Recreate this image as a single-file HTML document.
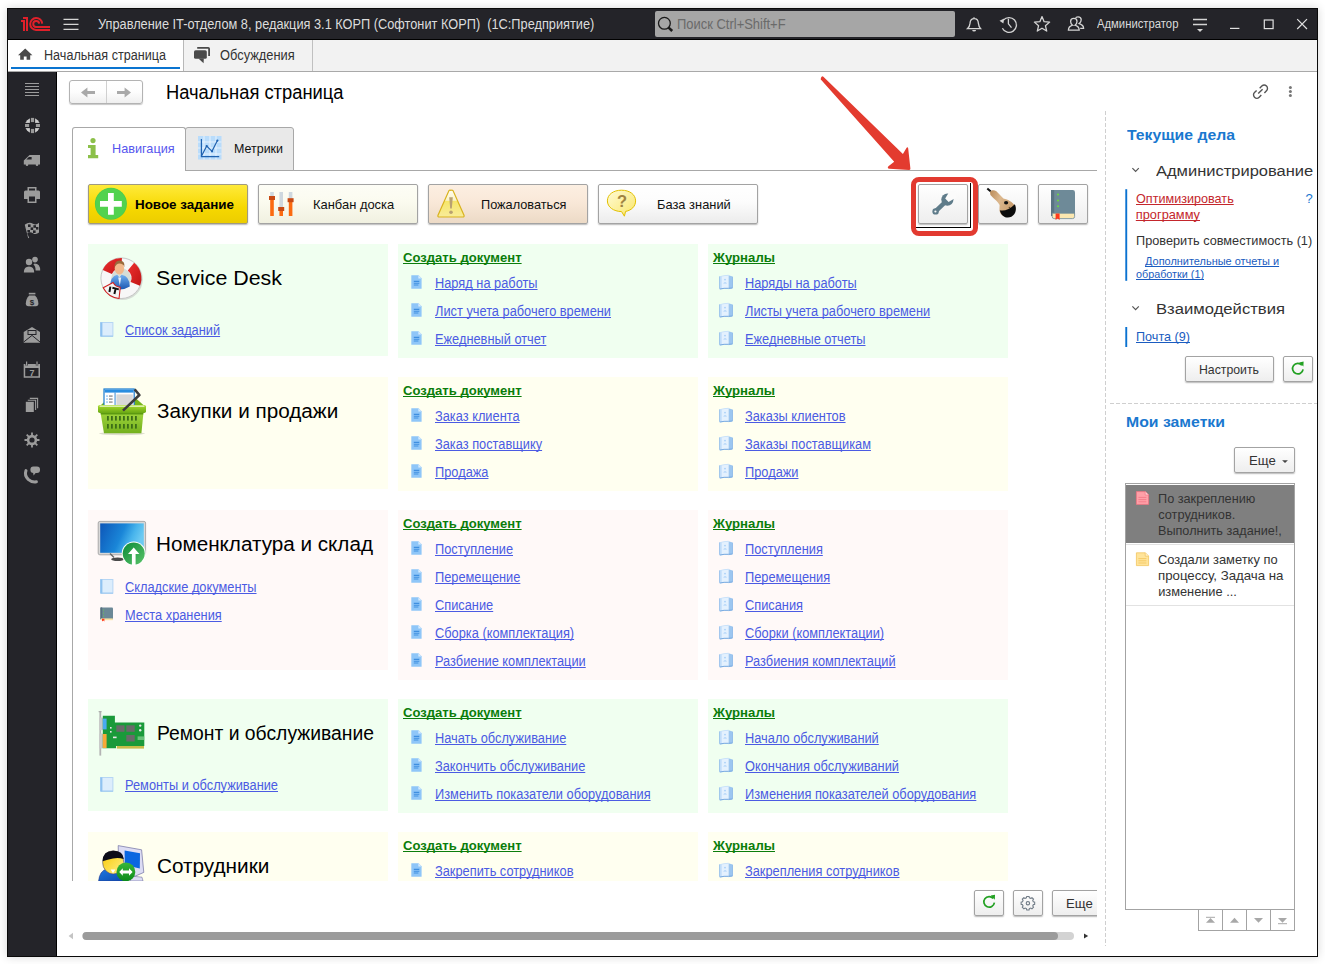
<!DOCTYPE html>
<html><head><meta charset="utf-8">
<style>
*{margin:0;padding:0;box-sizing:border-box}
html,body{width:1325px;height:964px;overflow:hidden;background:#fff;font-family:"Liberation Sans",sans-serif;position:relative}
.a{position:absolute;line-height:1;white-space:nowrap}
.sx{transform-origin:0 0}
svg{position:absolute;overflow:visible}
#frame{position:absolute;left:7px;top:8px;width:1311px;height:949px;border:1px solid #0a0a0a;box-shadow:0 0 9px rgba(0,0,0,0.16)}
#tb{position:absolute;left:8px;top:9px;width:1309px;height:31px;background:#242429;border-bottom:1px solid #000}
#tabs{position:absolute;left:8px;top:40px;width:1309px;height:32px;background:#f2f2f2;border-bottom:1px solid #a9a9a9}
#side{position:absolute;left:8px;top:72px;width:49px;height:884px;background:#242429;border-right:1px solid #000}
.lnk{color:#4a4ae8;text-decoration:underline;font-size:12.7px}
.hdr{color:#0a8a0a;font-weight:bold;text-decoration:underline;font-size:13px}
.btn{position:absolute;border:1px solid #a3a3a3;border-radius:2px;box-shadow:0 1px 1.5px rgba(0,0,0,0.28);background:linear-gradient(#ffffff,#eeeeee)}
</style></head>
<body>
<div id="frame"></div>
<div id="tb"></div>
<!-- title bar content -->
<svg style="left:0;top:0" width="60" height="40" viewBox="0 0 60 40">
  <g fill="none" stroke="#e0202a" stroke-width="2">
    <path d="M21 21H24V31"/><path d="M23 18H27V31"/>
    <path d="M42.2 23.6A6 6 0 1 0 36 30H50"/>
    <path d="M39.2 23.6A3 3 0 1 0 36 27H50"/>
  </g>
</svg>
<svg style="left:0;top:0" width="90" height="40">
  <g stroke="#d6d6d6" stroke-width="1.4"><path d="M63.5 19.4H78.5M63.5 24.4H78.5M63.5 29.4H78.5"/></g>
</svg>
<div class="a" style="left:98.4px;top:17.35px;font-size:14.0px;color:#dcdcdc;transform:scaleX(0.9121);transform-origin:0 0;">Управление IT-отделом 8, редакция 3.1 КОРП (Софтонит КОРП)&nbsp; (1С:Предприятие)</div>
<div class="a" style="left:655px;top:11px;width:300px;height:26px;background:#a6a6a6;border-radius:2px"></div>
<svg style="left:0;top:0" width="700" height="40">
  <g fill="none" stroke="#1a1a1a" stroke-width="1.3"><circle cx="664.4" cy="23.3" r="5.9"/><path d="M668.6 27.6L672.2 31" stroke-width="2.6"/></g>
</svg>
<div class="a" style="left:677.4px;top:16.68px;font-size:14.2px;color:#6a6a6a;transform:scaleX(0.9130);transform-origin:0 0;">Поиск Ctrl+Shift+F</div>
<!-- right icons -->
<svg style="left:0;top:0" width="1325" height="40">
  <g fill="none" stroke="#d4d4d4" stroke-width="1.3">
    <path d="M974 17.2V18.6M968 28.6H980.6C979 27 978.6 25.6 978.4 23.4C978.2 20.4 976.6 18.6 974.2 18.6C971.8 18.6 970.2 20.4 970 23.4C969.8 25.6 969.4 27 967.6 28.6Z"/>
    <path d="M972.5 30.6H975.8" stroke-width="1.2"/>
    <path d="M1003.4 20.2A7.4 7.4 0 1 1 1002.4 28.2"/>
    <path d="M1008.4 18.8V23.8L1011.5 27.6"/>
    <path d="M1042.00 16.60L1044.12 21.69L1049.61 22.13L1045.42 25.71L1046.70 31.07L1042.00 28.20L1037.30 31.07L1038.58 25.71L1034.39 22.13L1039.88 21.69Z" stroke-linejoin="round"/>
    <path d="M1068.4 30.2C1068.4 26.8 1070.6 25.8 1072.6 25.2C1071.2 24.2 1070.6 23 1070.6 21.4C1070.6 19.4 1072 18.4 1073.8 18.4C1075.6 18.4 1077 19.4 1077 21.4C1077 23 1076.4 24.2 1075 25.2C1077 25.8 1079.2 26.8 1079.2 30.2Z"/>
    <path d="M1075.4 18.6C1075.8 17.4 1076.8 16.8 1078 16.8C1079.8 16.8 1081.2 17.8 1081.2 19.8C1081.2 21.4 1080.6 22.6 1079.2 23.6C1081.2 24.2 1083.6 25.2 1083.6 28.4H1080.2"/>
  </g>
  <path d="M999.5 20.8L1004.2 18.6L1003.4 23.6Z" fill="#d4d4d4"/>
  <path d="M972.3 30L975.8 30L974 31.8Z" fill="#d4d4d4"/>
  <g stroke="#d4d4d4" stroke-width="1.3" fill="none"><path d="M1193 19.5H1207M1193 24.5H1207"/></g>
  <path d="M1197 29.1H1203L1200 32Z" fill="#d4d4d4"/>
  <g stroke="#e0e0e0" stroke-width="1.2" fill="none">
    <path d="M1230 28.4H1239.4"/>
    <rect x="1264.3" y="20" width="8.8" height="8.6"/>
    <path d="M1297.2 19.2L1307 29M1307 19.2L1297.2 29"/>
  </g>
</svg>
<div class="a" style="left:1097.3px;top:17.62px;font-size:12.5px;color:#dcdcdc;transform:scaleX(0.9026);transform-origin:0 0;">Администратор</div>

<!-- tabs bar -->
<div id="tabs"></div>
<div class="a" style="left:8px;top:40px;width:176px;height:31px;background:#fff;border-right:1px solid #b8b8b8"></div>
<div class="a" style="left:11px;top:67px;width:169px;height:2px;background:#0a74d0"></div>
<div class="a" style="left:312px;top:40px;width:1px;height:31px;background:#c0c0c0"></div>
<svg style="left:0;top:0" width="330" height="72">
  <path d="M25.2 48.6L18 55.2H20.2V59.8H23.8V56.4H26.6V59.8H30.2V55.2H32.4Z" fill="#4a4a4a"/>
  <path d="M197.2 47.9H208.2Q209.1 47.9 209.1 48.8V55.9" fill="none" stroke="#4a4a4a" stroke-width="1.8"/>
  <rect x="194" y="50.2" width="12.8" height="8.6" rx="1.6" fill="#4a4a4a"/>
  <path d="M198.4 58.4L203.6 63.2L203.8 58.4Z" fill="#4a4a4a"/>
</svg>
<div class="a" style="left:44.3px;top:47.95px;font-size:14.0px;color:#333;transform:scaleX(0.9006);transform-origin:0 0;">Начальная страница</div>
<div class="a" style="left:220.4px;top:47.95px;font-size:14.0px;color:#333;transform:scaleX(0.9180);transform-origin:0 0;">Обсуждения</div>

<!-- sidebar -->
<div id="side"></div>
<svg style="left:0;top:0" width="60" height="500">
  <g stroke="#9c9c9c" stroke-width="1" fill="none"><path d="M25 83.5H39M25 86.5H39M25 89.5H39M25 92.5H39M25 95.5H39"/></g>
  <g fill="#a0a0a0">
    <!-- lifebuoy -->
    <circle cx="32.5" cy="125.5" r="7.5" fill="#cdcdcd"/>
  </g>
  <g fill="#242429"><rect x="29.9" y="117" width="5.2" height="17"/><rect x="24" y="122.9" width="17" height="5.2"/></g>
  <g fill="#9a9a9a"><rect x="30.9" y="117.9" width="3.2" height="4.2"/><rect x="30.9" y="128.9" width="3.2" height="4.2"/><rect x="25" y="124" width="4.1" height="3"/><rect x="35.9" y="124" width="4.1" height="3"/></g>
  <g fill="#9c9c9c">
    <!-- truck -->
    <path d="M27 157.5L29.5 155H40V164.4H23.8V160.5Z"/><circle cx="27" cy="164.8" r="1.3"/><circle cx="37" cy="164.8" r="1.3"/>
    <!-- printer -->
    <path d="M27.5 187H36.5V190.5H38.5Q40 190.5 40 192V199H36.5V203H27.5V199H24V192Q24 190.5 25.5 190.5H27.5Z M29 188.5V190.5H35V188.5Z M29 196.5V201.5H35V196.5Z" fill-rule="evenodd"/>
    <!-- flag -->
    <path d="M25 224.6Q29 221.6 33 223.8Q36 225.6 39 222.8V232.6Q36 235.2 33 233.2Q29.5 231.4 27.2 233.4L29.2 237.8L28.2 238.2L24.8 225Z"/>
    <!-- people -->
    <circle cx="29" cy="262" r="3.2"/><path d="M23.8 272.4Q23.8 266.6 29 266.4Q34.2 266.6 34.2 272.4Z"/>
    <circle cx="35" cy="259.6" r="2.8"/><path d="M34.6 263.4Q40.2 263.6 40.2 270.4H35.6Q35.6 266 33.4 264.6Z"/>
    <!-- money bag -->
    <rect x="28.8" y="292.8" width="6.6" height="1.6"/>
    <path d="M29.2 295.4H35Q38.4 299 38.4 303.6Q38.4 306.3 35.8 306.3H28.4Q25.8 306.3 25.8 303.6Q25.8 299 29.2 295.4Z"/>
    <!-- envelope -->
    <path d="M32 327L40 332V342.8H23.7V332Z"/>
    <!-- calendar -->
    <path d="M23.7 364H40V377.8H23.7Z M25.2 368H38.5V376.3H25.2Z" fill-rule="evenodd"/>
    <!-- pages -->
    <rect x="25.8" y="401.8" width="8" height="10.2"/>
    <!-- gear -->
    <circle cx="32" cy="440" r="5.2"/>
    <!-- phone bubble -->
    <rect x="30.4" y="466.6" width="9.6" height="6.4" rx="3"/>
    <path d="M33 472.4L33.6 475.6L36 472.4Z"/>
  </g>
  <g fill="#242429">
    <text x="32.1" y="304.6" font-size="8" font-weight="bold" text-anchor="middle" font-family="Liberation Sans">$</text>
    
  </g>
  <g stroke="#242429" stroke-width="1" fill="none"><path d="M23.7 342L32 335.4L40 342"/><path d="M26.6 362V365.6M37 362V365.6" stroke="#242429" stroke-width="2.4"/></g>
  <g stroke="#9c9c9c" fill="none">
    <path d="M26.6 361.6V365.4M37 361.6V365.4" stroke-width="1.2"/>
    <path d="M32 432.5V447.5M24.5 440H39.5M26.7 434.7L37.3 445.3M37.3 434.7L26.7 445.3" stroke-width="1.8"/>
    <path d="M27.8 400.2H35.6V410M29.8 398.4H37.6V408.2" stroke-width="1.1"/>
    <path d="M26 470.6Q24.2 475.6 28.2 479.4Q31.8 482.6 36.4 481.8" stroke-width="3" stroke-linecap="round"/>
  </g>
  <text x="32" y="376" font-size="9" font-weight="bold" text-anchor="middle" font-family="Liberation Sans" fill="#9c9c9c">7</text>
  <circle cx="32" cy="440" r="2.6" fill="#242429"/>
  <path d="M26.4 159.6L28.8 157H31.6V159.6Z" fill="#242429"/>
  <g fill="#242429"><rect x="28" y="224.4" width="2.6" height="2.6"/><rect x="33.4" y="225.2" width="2.6" height="2.6"/><rect x="30.6" y="227.4" width="2.6" height="2.6"/><rect x="36" y="227" width="2.4" height="2.6"/><rect x="27.4" y="230" width="2.6" height="2.4"/><rect x="33" y="230.4" width="2.6" height="2.6"/></g><rect x="27.5" y="330" width="9" height="5" fill="#242429"/>
  <rect x="28.5" y="331" width="7" height="3" fill="#9c9c9c"/>
</svg>

<!-- ===== MAIN HEADER ===== -->
<div class="a" style="left:69px;top:80px;width:74px;height:24px;border:1px solid #b3b3b3;border-radius:3px;background:linear-gradient(#ffffff 0%,#fdfdfd 50%,#efefef 100%);box-shadow:0 1px 1px rgba(0,0,0,0.22)"></div>
<div class="a" style="left:106px;top:81px;width:1px;height:22px;background:#d0d0d0"></div>
<svg style="left:0;top:0" width="150" height="110">
  <g fill="#a9a9a9">
    <path d="M81 92.5L87.4 87.4V91H95V94H87.4V97.6Z"/>
    <path d="M131 92.5L124.6 87.4V91H117V94H124.6V97.6Z"/>
  </g>
</svg>
<div class="a" style="left:166.0px;top:82.51px;font-size:19.6px;color:#000;transform:scaleX(0.9362);transform-origin:0 0;">Начальная страница</div>
<svg style="left:0;top:0" width="1325" height="110">
  <g fill="none" stroke="#555" stroke-width="1.4" stroke-linecap="butt">
    <path d="M1256.6 90.4L1254.5 92.5A3.3 3.3 0 0 0 1259.2 97.2L1261.3 95.1"/>
    <path d="M1259.7 88.2L1261.8 86.1A3.3 3.3 0 0 1 1266.5 90.8L1264.4 92.9"/>
    <path d="M1258.2 93.6L1262.6 89.2"/>
  </g>
  <g fill="#777"><circle cx="1290.4" cy="87.4" r="1.5"/><circle cx="1290.4" cy="91.5" r="1.5"/><circle cx="1290.4" cy="95.6" r="1.5"/></g>
</svg>
<!-- splitter dashed -->
<svg style="left:0;top:0" width="1325" height="964">
  <path d="M1105.5 111V946" stroke="#cfcfcf" stroke-width="1" stroke-dasharray="4 2"/>
  <path d="M1110 403.5H1317" stroke="#cfcfcf" stroke-width="1" stroke-dasharray="4 2"/>
</svg>
<!-- ===== TABS ===== -->
<div class="a" style="left:72px;top:170px;width:1px;height:711px;background:#a8a8a8"></div>
<div class="a" style="left:185px;top:170px;width:912px;height:1px;background:#a8a8a8"></div>
<div class="a" style="left:185px;top:127px;width:109px;height:44px;background:#e9e9e9;border:1px solid #a8a8a8;border-radius:3px 3px 0 0"></div>
<div class="a" style="left:72px;top:127px;width:114px;height:44px;background:#fff;border:1px solid #a8a8a8;border-bottom:none;border-radius:3px 3px 0 0"></div>
<svg style="left:0;top:0" width="300" height="180">
  <g fill="#8cc04a">
    <circle cx="93" cy="140.6" r="2.6"/>
    <path d="M88 145H95.6V155H98.2V158.2H88V155H90.6V148H88Z"/>
  </g>
  <rect x="198" y="136" width="23.5" height="23.5" fill="#b9dcfb"/>
  <g stroke="#e6f2fe" stroke-width="1"><path d="M204 136V159.5M210 136V159.5M216 136V159.5M198 142H221.5M198 148H221.5M198 154H221.5"/></g>
  <g fill="none" stroke="#1f62b0" stroke-width="1.2"><path d="M201.4 139V156.6H219.2"/><path d="M201.8 155.6L206.7 146L212 151.3L217.4 140.6"/></g><g fill="#1f62b0"><circle cx="206.7" cy="146" r="1.1"/><circle cx="212" cy="151.3" r="1.1"/><circle cx="217.4" cy="140.6" r="1.1"/></g>
</svg>
<div class="a" style="left:111.6px;top:142.20px;font-size:13.0px;color:#5656ee;transform:scaleX(0.9746);transform-origin:0 0;">Навигация</div>
<div class="a" style="left:233.5px;top:142.20px;font-size:13.0px;color:#111;transform:scaleX(0.9576);transform-origin:0 0;">Метрики</div>
<!-- ===== TOOLBAR BUTTONS ===== -->
<div class="btn" style="left:88px;top:184px;width:160px;height:40px;background:linear-gradient(#ffea3a,#f6d800 60%,#eccd00);border-color:#a09a80"></div>
<svg style="left:0;top:0" width="260" height="230">
  <circle cx="110.9" cy="203.8" r="16" fill="#4ccc4c"/>
  <circle cx="110.9" cy="203.8" r="15.2" fill="#52d24f"/>
  <path d="M108 193H113.8V201H121.8V206.8H113.8V214.8H108V206.8H100V201H108Z" fill="#fff"/>
</svg>
<div class="a" style="left:134.5px;top:198.20px;font-size:13.0px;color:#000;font-weight:bold;transform:scaleX(1.0311);transform-origin:0 0;">Новое задание</div>
<div class="btn" style="left:258px;top:184px;width:160px;height:40px;background:linear-gradient(#fdfdf6,#fbfbef 45%,#f0f0e0)"></div>
<svg style="left:0;top:0" width="430" height="230">
  <g fill="#cfd8df"><rect x="270.2" y="192" width="3.6" height="5"/><rect x="279.4" y="192" width="3.6" height="16"/><rect x="288.8" y="192" width="3.6" height="7"/></g>
  <g fill="#fb6a10"><rect x="270.2" y="199" width="3.6" height="17"/><rect x="279.4" y="210" width="3.6" height="6"/><rect x="288.8" y="201" width="3.6" height="15"/></g>
  <g fill="#c84a14"><rect x="269" y="196" width="6" height="4"/><rect x="278.2" y="207" width="6" height="4"/><rect x="287.6" y="198.2" width="6" height="4"/></g>
</svg>
<div class="a" style="left:313.4px;top:197.90px;font-size:13.0px;color:#111;transform:scaleX(0.9942);transform-origin:0 0;">Канбан доска</div>
<div class="btn" style="left:428px;top:184px;width:160px;height:40px;background:linear-gradient(#fcefe2,#f9e8d8 45%,#ecdac6)"></div>
<svg style="left:0;top:0" width="600" height="230">
  <defs><linearGradient id="wg" x1="0" y1="0" x2="0" y2="1"><stop offset="0" stop-color="#fffdf0"/><stop offset="0.38" stop-color="#fbf3c8"/><stop offset="0.42" stop-color="#f6e66a"/><stop offset="1" stop-color="#f8ec9a"/></linearGradient></defs>
  <path d="M451 190.4Q452 189.6 453 190.6L464 215.2Q464.6 217 462.6 217H439.4Q437.4 217 438 215.2L449 190.6Q449.6 189.8 451 190.4Z" fill="url(#wg)" stroke="#d9b21e" stroke-width="1.2"/>
  <path d="M449.2 197.2H452.8L451.8 208.6H450.2Z" fill="#b8a072"/>
  <circle cx="451" cy="212.2" r="1.8" fill="#b8a072"/>
</svg>
<div class="a" style="left:480.8px;top:197.90px;font-size:13.0px;color:#111;transform:scaleX(0.9794);transform-origin:0 0;">Пожаловаться</div>
<div class="btn" style="left:598px;top:184px;width:160px;height:40px;background:linear-gradient(#ffffff,#fcfcfc 45%,#ececec)"></div>
<svg style="left:0;top:0" width="700" height="230">
  <defs><linearGradient id="qg" x1="0" y1="0" x2="1" y2="1"><stop offset="0" stop-color="#fffbd6"/><stop offset="1" stop-color="#f9e66a"/></linearGradient></defs>
  <path d="M621.5 190.2C629.8 190.2 635.6 194.6 635.6 200.9C635.6 206.4 631.3 210.4 625.6 211.4L624.4 216.2L621.6 211.6C613.4 211.4 607.4 207 607.4 200.9C607.4 194.6 613.2 190.2 621.5 190.2Z" fill="url(#qg)" stroke="#e2c000" stroke-width="1"/>
  <text x="622" y="206.8" font-family="Liberation Sans" font-weight="bold" font-size="16.5" fill="#a08442" text-anchor="middle">?</text>
</svg>
<div class="a" style="left:657.0px;top:197.90px;font-size:13.0px;color:#111;transform:scaleX(0.9906);transform-origin:0 0;">База знаний</div>
<!-- right small buttons -->
<div class="btn" style="left:918px;top:184px;width:50px;height:40px"></div>
<div class="btn" style="left:978px;top:184px;width:50px;height:40px"></div>
<div class="btn" style="left:1038px;top:184px;width:50px;height:40px"></div>
<svg style="left:0;top:0" width="1100" height="240">
  <!-- wrench -->
  <path d="M935.5 211.4L945.4 201.8" stroke="#5f7c8a" stroke-width="4.4" stroke-linecap="round"/>
  <circle cx="935.6" cy="211.4" r="3.2" fill="#5f7c8a"/>
  <circle cx="947.4" cy="199.6" r="6.1" fill="#5f7c8a"/>
  <path d="M949.6 191.2L945.2 198.6L948.6 202L956.2 197.4L955.6 190.6Z" fill="#fbfbfb"/>
  <circle cx="935.4" cy="211.5" r="1.1" fill="#fafafa"/>
  <!-- scanner -->
  <defs><linearGradient id="scg" x1="0" y1="0" x2="1" y2="0.4"><stop offset="0" stop-color="#b98a58"/><stop offset="0.45" stop-color="#dcb88e"/><stop offset="1" stop-color="#c89c6c"/></linearGradient></defs>
  <path d="M987.3 188.6L990.8 191.6" stroke="#111" stroke-width="2"/>
  <path d="M990 192C991.5 189.8 994 189.6 996.4 191.2L1003.4 198.6C1008 199.4 1013.2 202.4 1015 206.4C1016.4 210.4 1013.6 215.4 1008.4 216.6C1003 217.4 999.6 214 999.4 209.4L999.6 205C998 201.6 992 197 990.4 195Z" fill="url(#scg)"/>
  <path d="M999.8 210.2C1004 211.6 1010 209 1014.8 204.2C1016.8 208.4 1016.2 213.8 1011.4 216.8C1006.4 219 1001.4 216.4 999.8 210.2Z" fill="#0c0c0c"/>
  <ellipse cx="1006.1" cy="202.8" rx="2.1" ry="1.8" fill="#111"/>
  <circle cx="1009.4" cy="207.6" r="0.8" fill="#6a5030"/>
  <!-- book -->
  <rect x="1051" y="190" width="24" height="26" rx="2.4" fill="#6e8a98"/>
  <rect x="1051" y="190" width="3.2" height="26" fill="#5a7482"/>
  <path d="M1052.2 213.2H1074.6V216.6Q1074.6 218.6 1072.6 218.6H1054.2Q1052.2 218.6 1052.2 216.6Z" fill="#fbe7b0" stroke="#6e8a98" stroke-width="0.8"/>
  <path d="M1055.6 213.6H1059.6V220L1057.6 218.4L1055.6 220Z" fill="#ff3a1c"/>
  <g fill="#6bdc3a"><circle cx="1058" cy="194.4" r="1"/><circle cx="1058" cy="200.4" r="1"/><circle cx="1058" cy="206.2" r="1"/></g>
</svg>
<!-- focus lines & red highlight -->
<div class="a" style="left:970px;top:182.5px;width:1.2px;height:45.5px;background:#000"></div>
<div class="a" style="left:916px;top:227px;width:55.2px;height:1.2px;background:#000"></div>
<div class="a" style="left:911px;top:177px;width:66.6px;height:59px;border:5px solid #e23a30;border-radius:8px"></div>
<!-- red arrow -->
<svg style="left:0;top:0" width="1000" height="200">
  <path d="M820.6 79.2L894.2 161.7L888.4 166.2Q886.8 168.4 889.4 168.8L909.2 169.9Q910.6 169.9 910.4 168.6L908.2 148.4Q907.9 146.6 906.6 147.8L902.9 153.9L823.4 76.8Q821.4 75.2 820.6 79.2Z" fill="#e33b2f"/>
</svg>

<div class="a" style="left:73px;top:171px;width:1024px;height:710px;overflow:hidden"><div class="a" style="left:-73px;top:-171px;width:1325px;height:964px">
<div class="a" style="left:88px;top:244px;width:300px;height:112px;background:#f0fff0"></div>
<div class="a" style="left:398px;top:244px;width:300px;height:114px;background:#f0fff0"></div>
<div class="a" style="left:708px;top:244px;width:300px;height:114px;background:#f0fff0"></div>
<svg style="left:0;top:0" width="160" height="310">
<defs><linearGradient id="lbw" x1="0.2" y1="0.1" x2="0.8" y2="0.95"><stop offset="0" stop-color="#ffffff"/><stop offset="0.6" stop-color="#f6f6f6"/><stop offset="1" stop-color="#d6d6d6"/></linearGradient>
<linearGradient id="lbr" x1="0" y1="0" x2="1" y2="1"><stop offset="0" stop-color="#ee3030"/><stop offset="1" stop-color="#c01414"/></linearGradient>
<linearGradient id="shirt" x1="0" y1="0" x2="0" y2="1"><stop offset="0" stop-color="#70aef0"/><stop offset="1" stop-color="#1a56b0"/></linearGradient></defs>
<circle cx="122.0" cy="279.2" r="20.8" fill="#bcbcbc" opacity="0.5"/>
<circle cx="121.2" cy="278.2" r="15.25" fill="none" stroke="#f7f7f7" stroke-width="10.5"/>
<circle cx="121.2" cy="278.2" r="20.3" fill="none" stroke="#b0b0b0" stroke-width="0.7"/>
<path d="M102.75 269.98A20.2 20.2 0 0 1 121.90 258.01L121.56 268.01A10.2 10.2 0 0 0 111.88 274.05Z" fill="url(#lbr)"/>
<path d="M134.18 262.73A20.2 20.2 0 0 1 139.93 285.77L130.66 282.02A10.2 10.2 0 0 0 127.76 270.39Z" fill="url(#lbr)"/>
<path d="M110.2 286.6Q110.2 276.4 117.2 274.8L119.4 277.6L121.6 274.8Q129.8 276.2 129.8 286.6Q125 289.6 119.6 289.6Q114.4 289.6 110.2 286.6Z" fill="url(#shirt)"/>
<path d="M118.2 277.6L119.8 285.4L121.2 277.4Z" fill="#e8eef6"/>
<ellipse cx="119.4" cy="268.4" rx="4.7" ry="6.2" fill="#f2b88c"/>
<path d="M114.6 267.8Q114 260.8 119.6 260.6Q125.2 260.8 124.4 267.2Q123.4 263.6 119.6 263.6Q115.8 263.8 114.6 267.8Z" fill="#9a6a3c"/>
<path d="M119.07 298.49A20.4 20.4 0 0 1 103.19 287.78L113.08 282.52A9.2 9.2 0 0 0 120.24 287.35Z" fill="#f4f4f4" stroke="#d02020" stroke-width="1.1"/>
<g stroke="#111" stroke-width="2" fill="none"><path d="M110.4 286.6L109.4 292"/><path d="M112.4 287.8L118.8 289.4M115.6 288.6L114.4 294"/></g>
</svg>
<div class="a" style="left:156.0px;top:269.09px;font-size:19.5px;color:#000;transform:scaleX(1.0968);transform-origin:0 0;">Service Desk</div>
<svg style="left:99.5px;top:321.5px" width="14" height="15" viewBox="0 0 14 15"><rect x="0.5" y="0.5" width="12.4" height="13.6" fill="#dcedfc" stroke="#b6d6f4" stroke-width="1"/><rect x="0.4" y="0.4" width="2" height="14" fill="#8fc2f0"/><path d="M1 14.2H13" stroke="#9cc8f0" stroke-width="1"/></svg>
<div class="a" style="left:125.2px;top:324.00px;font-size:13.8px;color:#4b5be3;text-decoration:underline;text-decoration-skip-ink:none;transform:scaleX(0.9280);transform-origin:0 0;">Список заданий</div>
<div class="a" style="left:403.0px;top:251.20px;font-size:13.7px;color:#0b7d0b;font-weight:bold;text-decoration:underline;text-decoration-skip-ink:none;transform:scaleX(0.9554);transform-origin:0 0;">Создать документ</div>
<div class="a" style="left:713.0px;top:251.20px;font-size:13.7px;color:#0b7d0b;font-weight:bold;text-decoration:underline;text-decoration-skip-ink:none;transform:scaleX(0.9622);transform-origin:0 0;">Журналы</div>
<svg style="left:410.5px;top:275px" width="12" height="14" viewBox="0 0 12 14"><path d="M0.3 0.3H7.6L10.6 3.3V13.7H0.3Z" fill="#8fc6f8"/><path d="M7.4 0.3L10.6 3.5H7.4Z" fill="#d8ecfe"/><path d="M2.8 6.4H8.3M2.8 8.2H8.3M2.8 10H7.4" stroke="#3f8fe0" stroke-width="1.1"/></svg>
<div class="a" style="left:435.2px;top:277.00px;font-size:13.8px;color:#4b5be3;text-decoration:underline;text-decoration-skip-ink:none;transform:scaleX(0.9280);transform-origin:0 0;">Наряд на работы</div>
<svg style="left:410.5px;top:303px" width="12" height="14" viewBox="0 0 12 14"><path d="M0.3 0.3H7.6L10.6 3.3V13.7H0.3Z" fill="#8fc6f8"/><path d="M7.4 0.3L10.6 3.5H7.4Z" fill="#d8ecfe"/><path d="M2.8 6.4H8.3M2.8 8.2H8.3M2.8 10H7.4" stroke="#3f8fe0" stroke-width="1.1"/></svg>
<div class="a" style="left:435.2px;top:305.00px;font-size:13.8px;color:#4b5be3;text-decoration:underline;text-decoration-skip-ink:none;transform:scaleX(0.9280);transform-origin:0 0;">Лист учета рабочего времени</div>
<svg style="left:410.5px;top:331px" width="12" height="14" viewBox="0 0 12 14"><path d="M0.3 0.3H7.6L10.6 3.3V13.7H0.3Z" fill="#8fc6f8"/><path d="M7.4 0.3L10.6 3.5H7.4Z" fill="#d8ecfe"/><path d="M2.8 6.4H8.3M2.8 8.2H8.3M2.8 10H7.4" stroke="#3f8fe0" stroke-width="1.1"/></svg>
<div class="a" style="left:435.2px;top:333.00px;font-size:13.8px;color:#4b5be3;text-decoration:underline;text-decoration-skip-ink:none;transform:scaleX(0.9280);transform-origin:0 0;">Ежедневный отчет</div>
<svg style="left:718.6px;top:274px" width="15" height="16" viewBox="0 0 15 16"><path d="M9.5 1.2L13.6 2.6V14.2L9.5 15.2Z" fill="#9cc6f0"/><path d="M0.5 2.2Q5 1 9.6 0.8V14.6Q5 14.6 1.6 15.6Q0.5 15.6 0.5 14.6Z" fill="#c6e0fa"/><path d="M2.8 2.6Q6 1.9 9.2 1.7V13.9Q6 14 2.8 14.8Z" fill="#e4f1fe"/><circle cx="6" cy="5.6" r="0.9" fill="#a8d0f8"/><path d="M4.2 9.4Q6 7 8 9.4Z" fill="#a8d0f8"/><path d="M0.8 15Q5 14 9.6 14.3L13.4 14" stroke="#78aae0" stroke-width="1" fill="none"/><path d="M0.6 2.4V14.8M13.5 2.8V14" stroke="#8ab8e8" stroke-width="0.8"/></svg>
<div class="a" style="left:745.2px;top:277.00px;font-size:13.8px;color:#4b5be3;text-decoration:underline;text-decoration-skip-ink:none;transform:scaleX(0.9280);transform-origin:0 0;">Наряды на работы</div>
<svg style="left:718.6px;top:302px" width="15" height="16" viewBox="0 0 15 16"><path d="M9.5 1.2L13.6 2.6V14.2L9.5 15.2Z" fill="#9cc6f0"/><path d="M0.5 2.2Q5 1 9.6 0.8V14.6Q5 14.6 1.6 15.6Q0.5 15.6 0.5 14.6Z" fill="#c6e0fa"/><path d="M2.8 2.6Q6 1.9 9.2 1.7V13.9Q6 14 2.8 14.8Z" fill="#e4f1fe"/><circle cx="6" cy="5.6" r="0.9" fill="#a8d0f8"/><path d="M4.2 9.4Q6 7 8 9.4Z" fill="#a8d0f8"/><path d="M0.8 15Q5 14 9.6 14.3L13.4 14" stroke="#78aae0" stroke-width="1" fill="none"/><path d="M0.6 2.4V14.8M13.5 2.8V14" stroke="#8ab8e8" stroke-width="0.8"/></svg>
<div class="a" style="left:745.2px;top:305.00px;font-size:13.8px;color:#4b5be3;text-decoration:underline;text-decoration-skip-ink:none;transform:scaleX(0.9280);transform-origin:0 0;">Листы учета рабочего времени</div>
<svg style="left:718.6px;top:330px" width="15" height="16" viewBox="0 0 15 16"><path d="M9.5 1.2L13.6 2.6V14.2L9.5 15.2Z" fill="#9cc6f0"/><path d="M0.5 2.2Q5 1 9.6 0.8V14.6Q5 14.6 1.6 15.6Q0.5 15.6 0.5 14.6Z" fill="#c6e0fa"/><path d="M2.8 2.6Q6 1.9 9.2 1.7V13.9Q6 14 2.8 14.8Z" fill="#e4f1fe"/><circle cx="6" cy="5.6" r="0.9" fill="#a8d0f8"/><path d="M4.2 9.4Q6 7 8 9.4Z" fill="#a8d0f8"/><path d="M0.8 15Q5 14 9.6 14.3L13.4 14" stroke="#78aae0" stroke-width="1" fill="none"/><path d="M0.6 2.4V14.8M13.5 2.8V14" stroke="#8ab8e8" stroke-width="0.8"/></svg>
<div class="a" style="left:745.2px;top:333.00px;font-size:13.8px;color:#4b5be3;text-decoration:underline;text-decoration-skip-ink:none;transform:scaleX(0.9280);transform-origin:0 0;">Ежедневные отчеты</div>
<div class="a" style="left:88px;top:377px;width:300px;height:112px;background:#fffff0"></div>
<div class="a" style="left:398px;top:377px;width:300px;height:114px;background:#fffff0"></div>
<div class="a" style="left:708px;top:377px;width:300px;height:114px;background:#fffff0"></div>
<svg style="left:0;top:0" width="160" height="450">
<defs><linearGradient id="bkg" x1="0" y1="0" x2="0" y2="1"><stop offset="0" stop-color="#9ed43c"/><stop offset="1" stop-color="#74b01e"/></linearGradient>
<linearGradient id="rim" x1="0" y1="0" x2="0" y2="1"><stop offset="0" stop-color="#a8dc2c"/><stop offset="1" stop-color="#6aa814"/></linearGradient></defs>
<ellipse cx="122" cy="433.6" rx="23" ry="1.6" fill="#c8c8b8" opacity="0.6"/>
<path d="M101 405L107.6 399H136.6L143.4 405Z" fill="#76b41a"/>
<rect x="104" y="389" width="30.2" height="17" fill="#fff" stroke="#1c7cd0" stroke-width="1.2"/>
<rect x="104.6" y="389.6" width="29" height="3" fill="#2a8ee0"/>
<rect x="114.6" y="392.6" width="0.9" height="13" fill="#1c7cd0"/>
<rect x="116.4" y="394.4" width="16.4" height="11" fill="#d8d8d8"/>
<g fill="#3a9ae8"><rect x="106.2" y="395.6" width="1.6" height="0.9"/><rect x="106.2" y="398.6" width="1.6" height="0.9"/><rect x="106.2" y="401.6" width="1.6" height="0.9"/></g>
<g fill="#555"><rect x="109" y="395.6" width="3.6" height="0.9"/><rect x="109" y="398.6" width="3.6" height="0.9"/><rect x="109" y="401.6" width="3.6" height="0.9"/></g>
<path d="M98 406.6Q98 405 99.8 405H144.2Q146 405 146 406.6V411.2Q146 413 144.2 413H99.8Q98 413 98 411.2Z" fill="url(#rim)"/>
<rect x="99.6" y="405.6" width="44.8" height="1.1" fill="#f4fbe0"/>
<path d="M123 410.6L139.4 395L134.6 389.4" fill="none" stroke="#3c3c3c" stroke-width="2.6" stroke-linejoin="round"/>
<path d="M100.6 413H143.4L141.4 433.2H104Z" fill="url(#bkg)"/>
<path d="M100.6 413H143.4L143.2 414.4H100.8Z" fill="#5c9a10"/>
<g fill="#3c6e18">
<rect x="107" y="416" width="1.8" height="4.6"/><rect x="111" y="416" width="1.8" height="4.6"/><rect x="115" y="416" width="1.8" height="4.6"/><rect x="119" y="416" width="1.8" height="4.6"/><rect x="123" y="416" width="1.8" height="4.6"/><rect x="127" y="416" width="1.8" height="4.6"/><rect x="131" y="416" width="1.8" height="4.6"/><rect x="135" y="416" width="1.8" height="4.6"/>
<rect x="107" y="424" width="1.8" height="4.6"/><rect x="111" y="424" width="1.8" height="4.6"/><rect x="115" y="424" width="1.8" height="4.6"/><rect x="119" y="424" width="1.8" height="4.6"/><rect x="123" y="424" width="1.8" height="4.6"/><rect x="127" y="424" width="1.8" height="4.6"/><rect x="131" y="424" width="1.8" height="4.6"/><rect x="135" y="424" width="1.8" height="4.6"/>
</g>
</svg>
<div class="a" style="left:157.0px;top:402.09px;font-size:19.5px;color:#000;transform:scaleX(1.0607);transform-origin:0 0;">Закупки и продажи</div>
<div class="a" style="left:403.0px;top:384.20px;font-size:13.7px;color:#0b7d0b;font-weight:bold;text-decoration:underline;text-decoration-skip-ink:none;transform:scaleX(0.9554);transform-origin:0 0;">Создать документ</div>
<div class="a" style="left:713.0px;top:384.20px;font-size:13.7px;color:#0b7d0b;font-weight:bold;text-decoration:underline;text-decoration-skip-ink:none;transform:scaleX(0.9622);transform-origin:0 0;">Журналы</div>
<svg style="left:410.5px;top:408px" width="12" height="14" viewBox="0 0 12 14"><path d="M0.3 0.3H7.6L10.6 3.3V13.7H0.3Z" fill="#8fc6f8"/><path d="M7.4 0.3L10.6 3.5H7.4Z" fill="#d8ecfe"/><path d="M2.8 6.4H8.3M2.8 8.2H8.3M2.8 10H7.4" stroke="#3f8fe0" stroke-width="1.1"/></svg>
<div class="a" style="left:435.2px;top:410.00px;font-size:13.8px;color:#4b5be3;text-decoration:underline;text-decoration-skip-ink:none;transform:scaleX(0.9280);transform-origin:0 0;">Заказ клиента</div>
<svg style="left:410.5px;top:436px" width="12" height="14" viewBox="0 0 12 14"><path d="M0.3 0.3H7.6L10.6 3.3V13.7H0.3Z" fill="#8fc6f8"/><path d="M7.4 0.3L10.6 3.5H7.4Z" fill="#d8ecfe"/><path d="M2.8 6.4H8.3M2.8 8.2H8.3M2.8 10H7.4" stroke="#3f8fe0" stroke-width="1.1"/></svg>
<div class="a" style="left:435.2px;top:438.00px;font-size:13.8px;color:#4b5be3;text-decoration:underline;text-decoration-skip-ink:none;transform:scaleX(0.9280);transform-origin:0 0;">Заказ поставщику</div>
<svg style="left:410.5px;top:464px" width="12" height="14" viewBox="0 0 12 14"><path d="M0.3 0.3H7.6L10.6 3.3V13.7H0.3Z" fill="#8fc6f8"/><path d="M7.4 0.3L10.6 3.5H7.4Z" fill="#d8ecfe"/><path d="M2.8 6.4H8.3M2.8 8.2H8.3M2.8 10H7.4" stroke="#3f8fe0" stroke-width="1.1"/></svg>
<div class="a" style="left:435.2px;top:466.00px;font-size:13.8px;color:#4b5be3;text-decoration:underline;text-decoration-skip-ink:none;transform:scaleX(0.9280);transform-origin:0 0;">Продажа</div>
<svg style="left:718.6px;top:407px" width="15" height="16" viewBox="0 0 15 16"><path d="M9.5 1.2L13.6 2.6V14.2L9.5 15.2Z" fill="#9cc6f0"/><path d="M0.5 2.2Q5 1 9.6 0.8V14.6Q5 14.6 1.6 15.6Q0.5 15.6 0.5 14.6Z" fill="#c6e0fa"/><path d="M2.8 2.6Q6 1.9 9.2 1.7V13.9Q6 14 2.8 14.8Z" fill="#e4f1fe"/><circle cx="6" cy="5.6" r="0.9" fill="#a8d0f8"/><path d="M4.2 9.4Q6 7 8 9.4Z" fill="#a8d0f8"/><path d="M0.8 15Q5 14 9.6 14.3L13.4 14" stroke="#78aae0" stroke-width="1" fill="none"/><path d="M0.6 2.4V14.8M13.5 2.8V14" stroke="#8ab8e8" stroke-width="0.8"/></svg>
<div class="a" style="left:745.2px;top:410.00px;font-size:13.8px;color:#4b5be3;text-decoration:underline;text-decoration-skip-ink:none;transform:scaleX(0.9280);transform-origin:0 0;">Заказы клиентов</div>
<svg style="left:718.6px;top:435px" width="15" height="16" viewBox="0 0 15 16"><path d="M9.5 1.2L13.6 2.6V14.2L9.5 15.2Z" fill="#9cc6f0"/><path d="M0.5 2.2Q5 1 9.6 0.8V14.6Q5 14.6 1.6 15.6Q0.5 15.6 0.5 14.6Z" fill="#c6e0fa"/><path d="M2.8 2.6Q6 1.9 9.2 1.7V13.9Q6 14 2.8 14.8Z" fill="#e4f1fe"/><circle cx="6" cy="5.6" r="0.9" fill="#a8d0f8"/><path d="M4.2 9.4Q6 7 8 9.4Z" fill="#a8d0f8"/><path d="M0.8 15Q5 14 9.6 14.3L13.4 14" stroke="#78aae0" stroke-width="1" fill="none"/><path d="M0.6 2.4V14.8M13.5 2.8V14" stroke="#8ab8e8" stroke-width="0.8"/></svg>
<div class="a" style="left:745.2px;top:438.00px;font-size:13.8px;color:#4b5be3;text-decoration:underline;text-decoration-skip-ink:none;transform:scaleX(0.9280);transform-origin:0 0;">Заказы поставщикам</div>
<svg style="left:718.6px;top:463px" width="15" height="16" viewBox="0 0 15 16"><path d="M9.5 1.2L13.6 2.6V14.2L9.5 15.2Z" fill="#9cc6f0"/><path d="M0.5 2.2Q5 1 9.6 0.8V14.6Q5 14.6 1.6 15.6Q0.5 15.6 0.5 14.6Z" fill="#c6e0fa"/><path d="M2.8 2.6Q6 1.9 9.2 1.7V13.9Q6 14 2.8 14.8Z" fill="#e4f1fe"/><circle cx="6" cy="5.6" r="0.9" fill="#a8d0f8"/><path d="M4.2 9.4Q6 7 8 9.4Z" fill="#a8d0f8"/><path d="M0.8 15Q5 14 9.6 14.3L13.4 14" stroke="#78aae0" stroke-width="1" fill="none"/><path d="M0.6 2.4V14.8M13.5 2.8V14" stroke="#8ab8e8" stroke-width="0.8"/></svg>
<div class="a" style="left:745.2px;top:466.00px;font-size:13.8px;color:#4b5be3;text-decoration:underline;text-decoration-skip-ink:none;transform:scaleX(0.9280);transform-origin:0 0;">Продажи</div>
<div class="a" style="left:88px;top:510px;width:300px;height:160px;background:#fff9f8"></div>
<div class="a" style="left:398px;top:510px;width:300px;height:170px;background:#fff9f8"></div>
<div class="a" style="left:708px;top:510px;width:300px;height:170px;background:#fff9f8"></div>
<svg style="left:0;top:0" width="160" height="580">
<defs><linearGradient id="scr" x1="0" y1="0" x2="1" y2="0.3"><stop offset="0" stop-color="#0d56b8"/><stop offset="0.55" stop-color="#1a86d8"/><stop offset="0.8" stop-color="#48b4ec"/><stop offset="1" stop-color="#6ccaf2"/></linearGradient>
<linearGradient id="grn" x1="0" y1="0" x2="1" y2="1"><stop offset="0" stop-color="#0a8a38"/><stop offset="1" stop-color="#5cc46a"/></linearGradient></defs>
<rect x="98.2" y="521.4" width="47.4" height="33.4" rx="1.6" fill="#d8d8d8" stroke="#9a9a9a" stroke-width="0.8"/>
<rect x="100.2" y="523.4" width="43.6" height="29.4" fill="url(#scr)"/>
<path d="M110 553.4L114 557.6" stroke="#666" stroke-width="1.4"/>
<ellipse cx="117.6" cy="559.2" rx="6.4" ry="1.8" fill="#4a4a4a"/>
<circle cx="133.7" cy="553.6" r="12" fill="#fff"/>
<circle cx="133.7" cy="553.6" r="11" fill="url(#grn)"/>
<path d="M133.7 547.6L139.4 554H135.6V565H131.9V554H128Z" fill="#fff"/>
</svg>
<div class="a" style="left:156.2px;top:535.09px;font-size:19.5px;color:#000;transform:scaleX(1.0601);transform-origin:0 0;">Номенклатура и склад</div>
<svg style="left:99.5px;top:578.5px" width="14" height="15" viewBox="0 0 14 15"><rect x="0.5" y="0.5" width="12.4" height="13.6" fill="#dcedfc" stroke="#b6d6f4" stroke-width="1"/><rect x="0.4" y="0.4" width="2" height="14" fill="#8fc2f0"/><path d="M1 14.2H13" stroke="#9cc8f0" stroke-width="1"/></svg>
<div class="a" style="left:125.2px;top:581.00px;font-size:13.8px;color:#4b5be3;text-decoration:underline;text-decoration-skip-ink:none;transform:scaleX(0.9280);transform-origin:0 0;">Складские документы</div>
<svg style="left:99.5px;top:606.5px" width="14" height="15" viewBox="0 0 14 15"><rect x="0.4" y="0.4" width="12.6" height="12" rx="1" fill="#6b8896"/><rect x="0.4" y="0.4" width="1.8" height="12" fill="#56707e"/><path d="M1 11.4H12.8V13.2H1Z" fill="#f7e4a8"/><path d="M2 11.8H4.4V14.6L3.2 13.6L2 14.6Z" fill="#ff3d1e"/><circle cx="3.6" cy="3" r="0.5" fill="#6bdc3a"/><circle cx="3.6" cy="6" r="0.5" fill="#6bdc3a"/><circle cx="3.6" cy="9" r="0.5" fill="#6bdc3a"/></svg>
<div class="a" style="left:125.2px;top:609.00px;font-size:13.8px;color:#4b5be3;text-decoration:underline;text-decoration-skip-ink:none;transform:scaleX(0.9280);transform-origin:0 0;">Места хранения</div>
<div class="a" style="left:403.0px;top:517.20px;font-size:13.7px;color:#0b7d0b;font-weight:bold;text-decoration:underline;text-decoration-skip-ink:none;transform:scaleX(0.9554);transform-origin:0 0;">Создать документ</div>
<div class="a" style="left:713.0px;top:517.20px;font-size:13.7px;color:#0b7d0b;font-weight:bold;text-decoration:underline;text-decoration-skip-ink:none;transform:scaleX(0.9622);transform-origin:0 0;">Журналы</div>
<svg style="left:410.5px;top:541px" width="12" height="14" viewBox="0 0 12 14"><path d="M0.3 0.3H7.6L10.6 3.3V13.7H0.3Z" fill="#8fc6f8"/><path d="M7.4 0.3L10.6 3.5H7.4Z" fill="#d8ecfe"/><path d="M2.8 6.4H8.3M2.8 8.2H8.3M2.8 10H7.4" stroke="#3f8fe0" stroke-width="1.1"/></svg>
<div class="a" style="left:435.2px;top:543.00px;font-size:13.8px;color:#4b5be3;text-decoration:underline;text-decoration-skip-ink:none;transform:scaleX(0.9280);transform-origin:0 0;">Поступление</div>
<svg style="left:410.5px;top:569px" width="12" height="14" viewBox="0 0 12 14"><path d="M0.3 0.3H7.6L10.6 3.3V13.7H0.3Z" fill="#8fc6f8"/><path d="M7.4 0.3L10.6 3.5H7.4Z" fill="#d8ecfe"/><path d="M2.8 6.4H8.3M2.8 8.2H8.3M2.8 10H7.4" stroke="#3f8fe0" stroke-width="1.1"/></svg>
<div class="a" style="left:435.2px;top:571.00px;font-size:13.8px;color:#4b5be3;text-decoration:underline;text-decoration-skip-ink:none;transform:scaleX(0.9280);transform-origin:0 0;">Перемещение</div>
<svg style="left:410.5px;top:597px" width="12" height="14" viewBox="0 0 12 14"><path d="M0.3 0.3H7.6L10.6 3.3V13.7H0.3Z" fill="#8fc6f8"/><path d="M7.4 0.3L10.6 3.5H7.4Z" fill="#d8ecfe"/><path d="M2.8 6.4H8.3M2.8 8.2H8.3M2.8 10H7.4" stroke="#3f8fe0" stroke-width="1.1"/></svg>
<div class="a" style="left:435.2px;top:599.00px;font-size:13.8px;color:#4b5be3;text-decoration:underline;text-decoration-skip-ink:none;transform:scaleX(0.9280);transform-origin:0 0;">Списание</div>
<svg style="left:410.5px;top:625px" width="12" height="14" viewBox="0 0 12 14"><path d="M0.3 0.3H7.6L10.6 3.3V13.7H0.3Z" fill="#8fc6f8"/><path d="M7.4 0.3L10.6 3.5H7.4Z" fill="#d8ecfe"/><path d="M2.8 6.4H8.3M2.8 8.2H8.3M2.8 10H7.4" stroke="#3f8fe0" stroke-width="1.1"/></svg>
<div class="a" style="left:435.2px;top:627.00px;font-size:13.8px;color:#4b5be3;text-decoration:underline;text-decoration-skip-ink:none;transform:scaleX(0.9280);transform-origin:0 0;">Сборка (комплектация)</div>
<svg style="left:410.5px;top:653px" width="12" height="14" viewBox="0 0 12 14"><path d="M0.3 0.3H7.6L10.6 3.3V13.7H0.3Z" fill="#8fc6f8"/><path d="M7.4 0.3L10.6 3.5H7.4Z" fill="#d8ecfe"/><path d="M2.8 6.4H8.3M2.8 8.2H8.3M2.8 10H7.4" stroke="#3f8fe0" stroke-width="1.1"/></svg>
<div class="a" style="left:435.2px;top:655.00px;font-size:13.8px;color:#4b5be3;text-decoration:underline;text-decoration-skip-ink:none;transform:scaleX(0.9280);transform-origin:0 0;">Разбиение комплектации</div>
<svg style="left:718.6px;top:540px" width="15" height="16" viewBox="0 0 15 16"><path d="M9.5 1.2L13.6 2.6V14.2L9.5 15.2Z" fill="#9cc6f0"/><path d="M0.5 2.2Q5 1 9.6 0.8V14.6Q5 14.6 1.6 15.6Q0.5 15.6 0.5 14.6Z" fill="#c6e0fa"/><path d="M2.8 2.6Q6 1.9 9.2 1.7V13.9Q6 14 2.8 14.8Z" fill="#e4f1fe"/><circle cx="6" cy="5.6" r="0.9" fill="#a8d0f8"/><path d="M4.2 9.4Q6 7 8 9.4Z" fill="#a8d0f8"/><path d="M0.8 15Q5 14 9.6 14.3L13.4 14" stroke="#78aae0" stroke-width="1" fill="none"/><path d="M0.6 2.4V14.8M13.5 2.8V14" stroke="#8ab8e8" stroke-width="0.8"/></svg>
<div class="a" style="left:745.2px;top:543.00px;font-size:13.8px;color:#4b5be3;text-decoration:underline;text-decoration-skip-ink:none;transform:scaleX(0.9280);transform-origin:0 0;">Поступления</div>
<svg style="left:718.6px;top:568px" width="15" height="16" viewBox="0 0 15 16"><path d="M9.5 1.2L13.6 2.6V14.2L9.5 15.2Z" fill="#9cc6f0"/><path d="M0.5 2.2Q5 1 9.6 0.8V14.6Q5 14.6 1.6 15.6Q0.5 15.6 0.5 14.6Z" fill="#c6e0fa"/><path d="M2.8 2.6Q6 1.9 9.2 1.7V13.9Q6 14 2.8 14.8Z" fill="#e4f1fe"/><circle cx="6" cy="5.6" r="0.9" fill="#a8d0f8"/><path d="M4.2 9.4Q6 7 8 9.4Z" fill="#a8d0f8"/><path d="M0.8 15Q5 14 9.6 14.3L13.4 14" stroke="#78aae0" stroke-width="1" fill="none"/><path d="M0.6 2.4V14.8M13.5 2.8V14" stroke="#8ab8e8" stroke-width="0.8"/></svg>
<div class="a" style="left:745.2px;top:571.00px;font-size:13.8px;color:#4b5be3;text-decoration:underline;text-decoration-skip-ink:none;transform:scaleX(0.9280);transform-origin:0 0;">Перемещения</div>
<svg style="left:718.6px;top:596px" width="15" height="16" viewBox="0 0 15 16"><path d="M9.5 1.2L13.6 2.6V14.2L9.5 15.2Z" fill="#9cc6f0"/><path d="M0.5 2.2Q5 1 9.6 0.8V14.6Q5 14.6 1.6 15.6Q0.5 15.6 0.5 14.6Z" fill="#c6e0fa"/><path d="M2.8 2.6Q6 1.9 9.2 1.7V13.9Q6 14 2.8 14.8Z" fill="#e4f1fe"/><circle cx="6" cy="5.6" r="0.9" fill="#a8d0f8"/><path d="M4.2 9.4Q6 7 8 9.4Z" fill="#a8d0f8"/><path d="M0.8 15Q5 14 9.6 14.3L13.4 14" stroke="#78aae0" stroke-width="1" fill="none"/><path d="M0.6 2.4V14.8M13.5 2.8V14" stroke="#8ab8e8" stroke-width="0.8"/></svg>
<div class="a" style="left:745.2px;top:599.00px;font-size:13.8px;color:#4b5be3;text-decoration:underline;text-decoration-skip-ink:none;transform:scaleX(0.9280);transform-origin:0 0;">Списания</div>
<svg style="left:718.6px;top:624px" width="15" height="16" viewBox="0 0 15 16"><path d="M9.5 1.2L13.6 2.6V14.2L9.5 15.2Z" fill="#9cc6f0"/><path d="M0.5 2.2Q5 1 9.6 0.8V14.6Q5 14.6 1.6 15.6Q0.5 15.6 0.5 14.6Z" fill="#c6e0fa"/><path d="M2.8 2.6Q6 1.9 9.2 1.7V13.9Q6 14 2.8 14.8Z" fill="#e4f1fe"/><circle cx="6" cy="5.6" r="0.9" fill="#a8d0f8"/><path d="M4.2 9.4Q6 7 8 9.4Z" fill="#a8d0f8"/><path d="M0.8 15Q5 14 9.6 14.3L13.4 14" stroke="#78aae0" stroke-width="1" fill="none"/><path d="M0.6 2.4V14.8M13.5 2.8V14" stroke="#8ab8e8" stroke-width="0.8"/></svg>
<div class="a" style="left:745.2px;top:627.00px;font-size:13.8px;color:#4b5be3;text-decoration:underline;text-decoration-skip-ink:none;transform:scaleX(0.9280);transform-origin:0 0;">Сборки (комплектации)</div>
<svg style="left:718.6px;top:652px" width="15" height="16" viewBox="0 0 15 16"><path d="M9.5 1.2L13.6 2.6V14.2L9.5 15.2Z" fill="#9cc6f0"/><path d="M0.5 2.2Q5 1 9.6 0.8V14.6Q5 14.6 1.6 15.6Q0.5 15.6 0.5 14.6Z" fill="#c6e0fa"/><path d="M2.8 2.6Q6 1.9 9.2 1.7V13.9Q6 14 2.8 14.8Z" fill="#e4f1fe"/><circle cx="6" cy="5.6" r="0.9" fill="#a8d0f8"/><path d="M4.2 9.4Q6 7 8 9.4Z" fill="#a8d0f8"/><path d="M0.8 15Q5 14 9.6 14.3L13.4 14" stroke="#78aae0" stroke-width="1" fill="none"/><path d="M0.6 2.4V14.8M13.5 2.8V14" stroke="#8ab8e8" stroke-width="0.8"/></svg>
<div class="a" style="left:745.2px;top:655.00px;font-size:13.8px;color:#4b5be3;text-decoration:underline;text-decoration-skip-ink:none;transform:scaleX(0.9280);transform-origin:0 0;">Разбиения комплектаций</div>
<div class="a" style="left:88px;top:699px;width:300px;height:112px;background:#f0fff0"></div>
<div class="a" style="left:398px;top:699px;width:300px;height:114px;background:#f0fff0"></div>
<div class="a" style="left:708px;top:699px;width:300px;height:114px;background:#f0fff0"></div>
<svg style="left:0;top:0" width="160" height="770">
<rect x="99.4" y="711.6" width="1.8" height="44" fill="#b4b4b4"/>
<rect x="98.6" y="711.2" width="3" height="1" fill="#a0a0a0"/>
<rect x="99.2" y="717.6" width="4" height="12.6" rx="1" fill="#c8c8c8"/>
<rect x="99.2" y="733.4" width="4" height="15.2" rx="1" fill="#c8c8c8"/>
<path d="M102.8 715.8H114.9V722.5H144.3V746H116V748.3H102.8Z" fill="#1a9a3a"/>
<rect x="102.8" y="718.6" width="3.8" height="10.8" fill="#4aaaf0"/>
<rect x="102.8" y="734" width="3.8" height="14" fill="#f8a838"/>
<rect x="116.8" y="746" width="27.2" height="2.6" fill="#c8bc4a"/>
<g fill="#6a6a6a"><rect x="116.3" y="725.3" width="8.2" height="6.5"/><rect x="126.3" y="725.3" width="8.4" height="6.5"/><rect x="126.3" y="735" width="8.4" height="6.5"/></g>
<g fill="#e8e8e8"><rect x="110" y="727" width="1.6" height="1.6"/><rect x="110" y="731" width="1.6" height="1.6"/><circle cx="140.2" cy="725.6" r="1.2"/><circle cx="140.2" cy="730.2" r="1.2"/><rect x="113" y="736.6" width="3.6" height="1.6"/></g>
<rect x="137.6" y="736.4" width="6.6" height="3.6" fill="#6ac07a"/>
</svg>
<div class="a" style="left:157.0px;top:724.09px;font-size:19.5px;color:#000;transform:scaleX(0.9909);transform-origin:0 0;">Ремонт и обслуживание</div>
<svg style="left:99.5px;top:776.5px" width="14" height="15" viewBox="0 0 14 15"><rect x="0.5" y="0.5" width="12.4" height="13.6" fill="#dcedfc" stroke="#b6d6f4" stroke-width="1"/><rect x="0.4" y="0.4" width="2" height="14" fill="#8fc2f0"/><path d="M1 14.2H13" stroke="#9cc8f0" stroke-width="1"/></svg>
<div class="a" style="left:125.2px;top:779.00px;font-size:13.8px;color:#4b5be3;text-decoration:underline;text-decoration-skip-ink:none;transform:scaleX(0.9280);transform-origin:0 0;">Ремонты и обслуживание</div>
<div class="a" style="left:403.0px;top:706.20px;font-size:13.7px;color:#0b7d0b;font-weight:bold;text-decoration:underline;text-decoration-skip-ink:none;transform:scaleX(0.9554);transform-origin:0 0;">Создать документ</div>
<div class="a" style="left:713.0px;top:706.20px;font-size:13.7px;color:#0b7d0b;font-weight:bold;text-decoration:underline;text-decoration-skip-ink:none;transform:scaleX(0.9622);transform-origin:0 0;">Журналы</div>
<svg style="left:410.5px;top:730px" width="12" height="14" viewBox="0 0 12 14"><path d="M0.3 0.3H7.6L10.6 3.3V13.7H0.3Z" fill="#8fc6f8"/><path d="M7.4 0.3L10.6 3.5H7.4Z" fill="#d8ecfe"/><path d="M2.8 6.4H8.3M2.8 8.2H8.3M2.8 10H7.4" stroke="#3f8fe0" stroke-width="1.1"/></svg>
<div class="a" style="left:435.2px;top:732.00px;font-size:13.8px;color:#4b5be3;text-decoration:underline;text-decoration-skip-ink:none;transform:scaleX(0.9280);transform-origin:0 0;">Начать обслуживание</div>
<svg style="left:410.5px;top:758px" width="12" height="14" viewBox="0 0 12 14"><path d="M0.3 0.3H7.6L10.6 3.3V13.7H0.3Z" fill="#8fc6f8"/><path d="M7.4 0.3L10.6 3.5H7.4Z" fill="#d8ecfe"/><path d="M2.8 6.4H8.3M2.8 8.2H8.3M2.8 10H7.4" stroke="#3f8fe0" stroke-width="1.1"/></svg>
<div class="a" style="left:435.2px;top:760.00px;font-size:13.8px;color:#4b5be3;text-decoration:underline;text-decoration-skip-ink:none;transform:scaleX(0.9280);transform-origin:0 0;">Закончить обслуживание</div>
<svg style="left:410.5px;top:786px" width="12" height="14" viewBox="0 0 12 14"><path d="M0.3 0.3H7.6L10.6 3.3V13.7H0.3Z" fill="#8fc6f8"/><path d="M7.4 0.3L10.6 3.5H7.4Z" fill="#d8ecfe"/><path d="M2.8 6.4H8.3M2.8 8.2H8.3M2.8 10H7.4" stroke="#3f8fe0" stroke-width="1.1"/></svg>
<div class="a" style="left:435.2px;top:788.00px;font-size:13.8px;color:#4b5be3;text-decoration:underline;text-decoration-skip-ink:none;transform:scaleX(0.9280);transform-origin:0 0;">Изменить показатели оборудования</div>
<svg style="left:718.6px;top:729px" width="15" height="16" viewBox="0 0 15 16"><path d="M9.5 1.2L13.6 2.6V14.2L9.5 15.2Z" fill="#9cc6f0"/><path d="M0.5 2.2Q5 1 9.6 0.8V14.6Q5 14.6 1.6 15.6Q0.5 15.6 0.5 14.6Z" fill="#c6e0fa"/><path d="M2.8 2.6Q6 1.9 9.2 1.7V13.9Q6 14 2.8 14.8Z" fill="#e4f1fe"/><circle cx="6" cy="5.6" r="0.9" fill="#a8d0f8"/><path d="M4.2 9.4Q6 7 8 9.4Z" fill="#a8d0f8"/><path d="M0.8 15Q5 14 9.6 14.3L13.4 14" stroke="#78aae0" stroke-width="1" fill="none"/><path d="M0.6 2.4V14.8M13.5 2.8V14" stroke="#8ab8e8" stroke-width="0.8"/></svg>
<div class="a" style="left:745.2px;top:732.00px;font-size:13.8px;color:#4b5be3;text-decoration:underline;text-decoration-skip-ink:none;transform:scaleX(0.9280);transform-origin:0 0;">Начало обслуживаний</div>
<svg style="left:718.6px;top:757px" width="15" height="16" viewBox="0 0 15 16"><path d="M9.5 1.2L13.6 2.6V14.2L9.5 15.2Z" fill="#9cc6f0"/><path d="M0.5 2.2Q5 1 9.6 0.8V14.6Q5 14.6 1.6 15.6Q0.5 15.6 0.5 14.6Z" fill="#c6e0fa"/><path d="M2.8 2.6Q6 1.9 9.2 1.7V13.9Q6 14 2.8 14.8Z" fill="#e4f1fe"/><circle cx="6" cy="5.6" r="0.9" fill="#a8d0f8"/><path d="M4.2 9.4Q6 7 8 9.4Z" fill="#a8d0f8"/><path d="M0.8 15Q5 14 9.6 14.3L13.4 14" stroke="#78aae0" stroke-width="1" fill="none"/><path d="M0.6 2.4V14.8M13.5 2.8V14" stroke="#8ab8e8" stroke-width="0.8"/></svg>
<div class="a" style="left:745.2px;top:760.00px;font-size:13.8px;color:#4b5be3;text-decoration:underline;text-decoration-skip-ink:none;transform:scaleX(0.9280);transform-origin:0 0;">Окончания обслуживаний</div>
<svg style="left:718.6px;top:785px" width="15" height="16" viewBox="0 0 15 16"><path d="M9.5 1.2L13.6 2.6V14.2L9.5 15.2Z" fill="#9cc6f0"/><path d="M0.5 2.2Q5 1 9.6 0.8V14.6Q5 14.6 1.6 15.6Q0.5 15.6 0.5 14.6Z" fill="#c6e0fa"/><path d="M2.8 2.6Q6 1.9 9.2 1.7V13.9Q6 14 2.8 14.8Z" fill="#e4f1fe"/><circle cx="6" cy="5.6" r="0.9" fill="#a8d0f8"/><path d="M4.2 9.4Q6 7 8 9.4Z" fill="#a8d0f8"/><path d="M0.8 15Q5 14 9.6 14.3L13.4 14" stroke="#78aae0" stroke-width="1" fill="none"/><path d="M0.6 2.4V14.8M13.5 2.8V14" stroke="#8ab8e8" stroke-width="0.8"/></svg>
<div class="a" style="left:745.2px;top:788.00px;font-size:13.8px;color:#4b5be3;text-decoration:underline;text-decoration-skip-ink:none;transform:scaleX(0.9280);transform-origin:0 0;">Изменения показателей оборудования</div>
<div class="a" style="left:88px;top:832px;width:300px;height:112px;background:#fffff0"></div>
<div class="a" style="left:398px;top:832px;width:300px;height:114px;background:#fffff0"></div>
<div class="a" style="left:708px;top:832px;width:300px;height:114px;background:#fffff0"></div>
<svg style="left:0;top:0" width="160" height="890">
<defs><linearGradient id="face" x1="0" y1="0" x2="1" y2="1"><stop offset="0" stop-color="#f8c800"/><stop offset="1" stop-color="#fff088"/></linearGradient>
<linearGradient id="sgrn" x1="0" y1="0" x2="0" y2="1"><stop offset="0" stop-color="#3ab83a"/><stop offset="1" stop-color="#0a8a1a"/></linearGradient>
<linearGradient id="body" x1="0" y1="0" x2="1" y2="1"><stop offset="0" stop-color="#1e78e0"/><stop offset="1" stop-color="#0a4ab0"/></linearGradient></defs>
<path d="M118.2 845.6L141.6 849.8L143.8 872.4L131 878L118.8 875Z" fill="#dcdcf4" stroke="#7070a0" stroke-width="0.7"/>
<path d="M124.6 850.4L140 853.2L139.8 868.4L124.8 865Z" fill="#0a66e0"/>
<path d="M131 876L142 877.2L143 881H130Z" fill="#dcdcf4" stroke="#7070a0" stroke-width="0.6"/>
<path d="M98.6 881Q99.6 871 106.4 869L120.6 869.6Q126 873 126 881Z" fill="url(#body)" stroke="#2a3a90" stroke-width="0.6"/>
<ellipse cx="113.2" cy="862.4" rx="10.6" ry="11.6" fill="url(#face)" stroke="#4a4a80" stroke-width="0.6"/>
<path d="M102.6 861.2Q102.8 850.8 113.2 850.8Q123.2 850.8 123.8 859Q118 857.4 113 858.6Q107.6 859.8 102.6 861.2Z" fill="#0c0c18"/>
<path d="M110.6 869.4L113 873.2L115.4 869.6Z" fill="#fff"/>
<circle cx="125.9" cy="871.9" r="9.4" fill="url(#sgrn)"/>
<path d="M119.2 872L122.8 868.2V870.6H129V868.2L132.6 872L129 875.8V873.4H122.8V875.8Z" fill="#fff"/>
</svg>
<div class="a" style="left:157.0px;top:857.09px;font-size:19.5px;color:#000;transform:scaleX(1.0632);transform-origin:0 0;">Сотрудники</div>
<div class="a" style="left:403.0px;top:839.20px;font-size:13.7px;color:#0b7d0b;font-weight:bold;text-decoration:underline;text-decoration-skip-ink:none;transform:scaleX(0.9554);transform-origin:0 0;">Создать документ</div>
<div class="a" style="left:713.0px;top:839.20px;font-size:13.7px;color:#0b7d0b;font-weight:bold;text-decoration:underline;text-decoration-skip-ink:none;transform:scaleX(0.9622);transform-origin:0 0;">Журналы</div>
<svg style="left:410.5px;top:863px" width="12" height="14" viewBox="0 0 12 14"><path d="M0.3 0.3H7.6L10.6 3.3V13.7H0.3Z" fill="#8fc6f8"/><path d="M7.4 0.3L10.6 3.5H7.4Z" fill="#d8ecfe"/><path d="M2.8 6.4H8.3M2.8 8.2H8.3M2.8 10H7.4" stroke="#3f8fe0" stroke-width="1.1"/></svg>
<div class="a" style="left:435.2px;top:865.00px;font-size:13.8px;color:#4b5be3;text-decoration:underline;text-decoration-skip-ink:none;transform:scaleX(0.9280);transform-origin:0 0;">Закрепить сотрудников</div>
<svg style="left:718.6px;top:862px" width="15" height="16" viewBox="0 0 15 16"><path d="M9.5 1.2L13.6 2.6V14.2L9.5 15.2Z" fill="#9cc6f0"/><path d="M0.5 2.2Q5 1 9.6 0.8V14.6Q5 14.6 1.6 15.6Q0.5 15.6 0.5 14.6Z" fill="#c6e0fa"/><path d="M2.8 2.6Q6 1.9 9.2 1.7V13.9Q6 14 2.8 14.8Z" fill="#e4f1fe"/><circle cx="6" cy="5.6" r="0.9" fill="#a8d0f8"/><path d="M4.2 9.4Q6 7 8 9.4Z" fill="#a8d0f8"/><path d="M0.8 15Q5 14 9.6 14.3L13.4 14" stroke="#78aae0" stroke-width="1" fill="none"/><path d="M0.6 2.4V14.8M13.5 2.8V14" stroke="#8ab8e8" stroke-width="0.8"/></svg>
<div class="a" style="left:745.2px;top:865.00px;font-size:13.8px;color:#4b5be3;text-decoration:underline;text-decoration-skip-ink:none;transform:scaleX(0.9280);transform-origin:0 0;">Закрепления сотрудников</div>
</div></div>
<!-- ===== RIGHT PANEL ===== -->
<div class="a" style="left:1126.6px;top:126.68px;font-size:15.5px;color:#1a78cf;font-weight:bold;transform:scaleX(1.0174);transform-origin:0 0;">Текущие дела</div>
<svg style="left:0;top:0" width="1325" height="964">
  <g fill="none" stroke="#555" stroke-width="1.2"><path d="M1132.4 168.2L1135.6 171.4L1138.8 168.2"/><path d="M1132.4 306.4L1135.6 309.6L1138.8 306.4"/></g>
  <rect x="1125.3" y="189.2" width="1.9" height="91.6" fill="#0a72d0"/>
  <rect x="1125.3" y="327" width="1.9" height="20" fill="#0a72d0"/>
</svg>
<div class="a" style="left:1155.5px;top:162.58px;font-size:15.5px;color:#333;transform:scaleX(1.0635);transform-origin:0 0;">Администрирование</div>
<div class="a" style="left:1135.8px;top:193.16px;font-size:12.8px;color:#c4262c;text-decoration:underline;text-decoration-skip-ink:none;transform:scaleX(0.9858);transform-origin:0 0;">Оптимизировать</div>
<div class="a" style="left:1135.8px;top:209.36px;font-size:12.8px;color:#c4262c;text-decoration:underline;text-decoration-skip-ink:none;">программу</div>
<div class="a" style="left:1305.6px;top:192.10px;font-size:13.0px;color:#1a78cf;">?</div>
<div class="a" style="left:1135.5px;top:233.60px;font-size:13.0px;color:#333;transform:scaleX(0.9786);transform-origin:0 0;">Проверить совместимость (1)</div>
<div class="a" style="left:1145.4px;top:256.39px;font-size:11.0px;color:#1a5cc0;text-decoration:underline;text-decoration-skip-ink:none;transform:scaleX(0.9956);transform-origin:0 0;">Дополнительные отчеты и</div>
<div class="a" style="left:1135.8px;top:268.79px;font-size:11.0px;color:#1a5cc0;text-decoration:underline;text-decoration-skip-ink:none;transform:scaleX(0.9808);transform-origin:0 0;">обработки (1)</div>
<div class="a" style="left:1155.5px;top:300.58px;font-size:15.5px;color:#333;transform:scaleX(1.0739);transform-origin:0 0;">Взаимодействия</div>
<div class="a" style="left:1136.2px;top:330.30px;font-size:13.0px;color:#1a5cc0;text-decoration:underline;text-decoration-skip-ink:none;transform:scaleX(0.9711);transform-origin:0 0;">Почта (9)</div>
<div class="btn" style="left:1185px;top:356px;width:89px;height:26px"></div>
<div class="a" style="left:1199.2px;top:362.80px;font-size:13.0px;color:#333;transform:scaleX(0.9444);transform-origin:0 0;">Настроить</div>
<div class="btn" style="left:1283px;top:356px;width:30px;height:26px"></div>
<svg style="left:0;top:0" width="1325" height="964">
  <path d="M1301.9 365.2A5.3 5.3 0 1 0 1303.1 369.4" fill="none" stroke="#22a022" stroke-width="1.7"/>
  <path d="M1299.2 362.4L1303.6 361.6L1303.4 366.6Z" fill="#22a022"/>
</svg>
<div class="a" style="left:1125.5px;top:413.88px;font-size:15.5px;color:#1a78cf;font-weight:bold;transform:scaleX(1.0195);transform-origin:0 0;">Мои заметки</div>
<div class="btn" style="left:1234px;top:447px;width:61px;height:26px"></div>
<div class="a" style="left:1248.5px;top:453.90px;font-size:13.0px;color:#333;transform:scaleX(1.0131);transform-origin:0 0;">Еще</div>
<svg style="left:0;top:0" width="1325" height="964">
  <path d="M1282.1 460.2H1287.9L1285 463Z" fill="#444"/>
</svg>
<!-- notes list -->
<div class="a" style="left:1125px;top:483px;width:170px;height:427px;border:1px solid #a3a3a3;background:#fff"></div>
<div class="a" style="left:1126px;top:485px;width:168px;height:58px;background:#7f7f7f"></div>
<div class="a" style="left:1126px;top:544px;width:168px;height:1px;background:#e2e2e2"></div>
<div class="a" style="left:1126px;top:605px;width:168px;height:1px;background:#e2e2e2"></div>
<svg style="left:0;top:0" width="1325" height="964">
  <path d="M1136.4 491.6H1145.4L1148.6 494.8V504.4H1136.4Z" fill="#ffa0a8" stroke="#f07080" stroke-width="0.7"/>
  <path d="M1145.2 491.6V495H1148.6" fill="#ffd0d4" stroke="#f07080" stroke-width="0.6"/>
  <g stroke="#f07080" stroke-width="0.7"><path d="M1138.4 497.4H1146.4M1138.4 499.6H1146.4M1138.4 501.8H1146.4"/></g>
  <path d="M1136.4 552.8H1145.4L1148.6 556V565.6H1136.4Z" fill="#ffe49a" stroke="#f0c050" stroke-width="0.7"/>
  <path d="M1145.2 552.8V556.2H1148.6" fill="#fff0c8" stroke="#f0c050" stroke-width="0.6"/>
  <g stroke="#f0c050" stroke-width="0.7"><path d="M1138.4 558.6H1146.4M1138.4 560.8H1146.4M1138.4 563H1146.4"/></g>
</svg>
<div class="a" style="left:1158.2px;top:493.16px;font-size:12.8px;color:#333;transform:scaleX(0.9927);transform-origin:0 0;">По закреплению</div>
<div class="a" style="left:1158.2px;top:508.96px;font-size:12.8px;color:#333;">сотрудников.</div>
<div class="a" style="left:1158.2px;top:524.66px;font-size:12.8px;color:#333;transform:scaleX(0.9882);transform-origin:0 0;">Выполнить задание!,</div>
<div class="a" style="left:1158.2px;top:554.16px;font-size:12.8px;color:#333;transform:scaleX(1.0081);transform-origin:0 0;">Создали заметку по</div>
<div class="a" style="left:1158.2px;top:569.96px;font-size:12.8px;color:#333;transform:scaleX(1.0357);transform-origin:0 0;">процессу, Задача на</div>
<div class="a" style="left:1158.2px;top:586.16px;font-size:12.8px;color:#333;">изменение ...</div>
<!-- nav buttons -->
<div class="a" style="left:1198px;top:909px;width:97px;height:22px;border:1px solid #a3a3a3;background:#fff"></div>
<div class="a" style="left:1222px;top:909px;width:1px;height:22px;background:#a3a3a3"></div>
<div class="a" style="left:1246px;top:909px;width:1px;height:22px;background:#a3a3a3"></div>
<div class="a" style="left:1270px;top:909px;width:1px;height:22px;background:#a3a3a3"></div>
<svg style="left:0;top:0" width="1325" height="964">
  <g fill="#a8a8a8">
    <rect x="1206" y="916.8" width="9" height="1"/><path d="M1210.5 918L1215 922.8H1206Z"/>
    <path d="M1234.5 917.8L1239 922.8H1230Z"/>
    <path d="M1254 918H1263L1258.5 922.8Z"/>
    <path d="M1278 918H1287L1282.5 922.8Z"/><rect x="1278" y="923.2" width="9" height="1"/>
  </g>
</svg>
<!-- ===== BOTTOM BUTTONS & SCROLLBAR ===== -->
<div class="a" style="left:73px;top:880px;width:1024px;height:60px;overflow:hidden"><div class="a" style="left:-73px;top:-880px;width:1325px;height:964px">
<div class="btn" style="left:974px;top:890px;width:30px;height:26px"></div>
<div class="btn" style="left:1013px;top:890px;width:30px;height:26px"></div>
<div class="btn" style="left:1052px;top:890px;width:60px;height:26px"></div>
<div class="a" style="left:1066.4px;top:897.00px;font-size:13.0px;color:#333;transform:scaleX(1.0131);transform-origin:0 0;">Еще</div>
</div></div>
<svg style="left:0;top:0" width="1325" height="964">
  <path d="M993.2 898.4A5.3 5.3 0 1 0 994.4 902.6" fill="none" stroke="#22a022" stroke-width="1.7"/>
  <path d="M990.6 895.6L995 894.8L994.8 899.8Z" fill="#22a022"/>
  <g transform="translate(1027.9 903.2) scale(0.88)" fill="none" stroke="#6f7a85" stroke-width="1.2">
    <path d="M-1.3 -6.8H1.3L1.7 -5.2L3.2 -4.6L4.6 -5.5L6.4 -3.7L5.5 -2.3L6.1 -0.8L7.7 -0.4V2.2L6.1 2.6L5.5 4.1L6.4 5.5L4.6 7.3L3.2 6.4L1.7 7L1.3 8.6H-1.3L-1.7 7L-3.2 6.4L-4.6 7.3L-6.4 5.5L-5.5 4.1L-6.1 2.6L-7.7 2.2V-0.4L-6.1 -0.8L-5.5 -2.3L-6.4 -3.7L-4.6 -5.5L-3.2 -4.6L-1.7 -5.2Z" transform="translate(0 -0.9)"/>
    <circle cx="0" cy="0" r="1.9" stroke-width="1.3"/>
  </g>
  <rect x="82.5" y="932" width="991.5" height="8" rx="4" fill="#d3d3d3"/>
  <rect x="82.5" y="932" width="975.5" height="8" rx="4" fill="#9b9b9b"/>
  <path d="M73 932.8V939.2L68.6 936Z" fill="#c4c4c4"/>
  <path d="M1084 933.4V938.6L1088.2 936Z" fill="#333"/>
</svg>

<!--MAIN4-->
</body></html>
